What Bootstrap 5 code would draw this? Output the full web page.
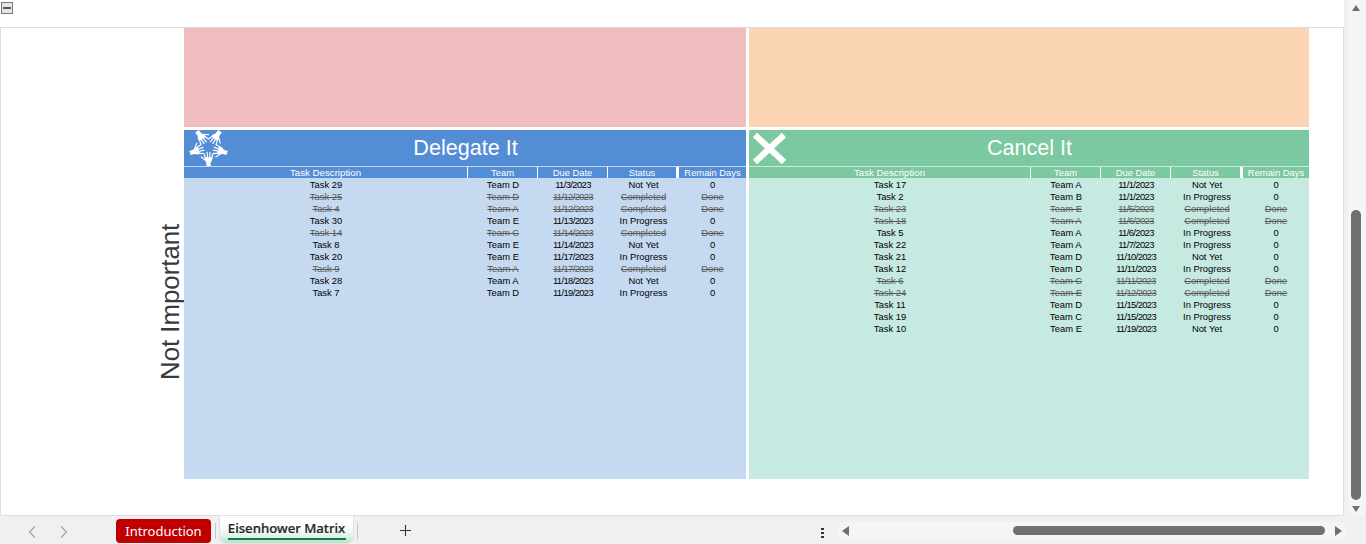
<!DOCTYPE html>
<html lang="en">
<head>
<meta charset="utf-8">
<title>Eisenhower Matrix</title>
<link href="https://cdn.jsdelivr.net/npm/bootstrap@5.3.0/dist/css/bootstrap.min.css" rel="stylesheet">
<style>
html,body{height:544px;overflow:hidden;background:#fff}
body{font-family:"Liberation Sans",Arial,sans-serif}
.xl-app{width:1366px;height:544px}
.xl-main{height:516px}
.xl-left{width:1344px}
.xl-top{height:27px;padding:2px 0 0 1px}
.xl-sheet{height:489px;border:1px solid #dfdfdf;background:#fff;display:grid;grid-template-columns:180px 562px 560px;grid-template-rows:99px 349px;column-gap:3px;row-gap:3px;align-content:start}
.fill-pink{background:#efbdbd}
.fill-peach{background:#fcd5b4}
.xl-label{grid-column:1;font-size:25.8px;line-height:26px;color:#3a3a3a;writing-mode:vertical-rl;transform:rotate(180deg);text-align:center;justify-self:end;height:344px;margin-right:-2px;white-space:nowrap}
.quad-blue{--hd:#538dd5;--bd:#c5d9f1}
.quad-green{--hd:#7cc8a0;--bd:#c6e9e1}
.quad{background:var(--bd);display:flex;flex-direction:column}
.quad-head{height:36px;background:var(--hd);color:#fff;font-size:21.6px;position:relative;display:flex;align-items:center;justify-content:center;margin-bottom:1px;padding-left:1px}
.quad-head svg{position:absolute;left:0;top:0}
.xl-tbl{width:100%;table-layout:fixed;border-collapse:separate;border-spacing:0;font-size:9.4px;text-align:center;color:#000}
.xl-tbl th{font-weight:400;color:#fff;background:var(--hd);height:11px;line-height:11px;padding:0;border-right:1px solid #fff;white-space:nowrap}
.xl-tbl th:first-child{font-size:9.7px}
.xl-tbl th.gapr{border-right:3px solid #fff}
.xl-tbl th:last-child{border-right:0}
.xl-tbl td{height:12px;line-height:11px;padding:1px 0 0;white-space:nowrap}
.xl-tbl td:nth-child(3){letter-spacing:-.6px}
.xl-tbl tr.dn td{color:#595959;text-decoration:line-through}
.vbar{width:22px;background:#f0f0f0;padding:0 0 0 4px}
.vtrack{background:#f5f5f5;height:516px;border-radius:0 0 8px 8px}
.vthumb{width:10px;height:290px;background:#707070;border-radius:5px;margin:199px 0 0 3px}
.tri-u{width:0;height:0;border-left:4.5px solid transparent;border-right:4.5px solid transparent;border-bottom:6px solid #707070;margin:5px 0 0 3.5px}
.tri-d{width:0;height:0;border-left:4.5px solid transparent;border-right:4.5px solid transparent;border-top:6px solid #707070;margin:6px 0 0 3.5px}
.tri-l{width:0;height:0;border-top:5px solid transparent;border-bottom:5px solid transparent;border-right:7px solid #707070}
.tri-r{width:0;height:0;border-top:5px solid transparent;border-bottom:5px solid transparent;border-left:7px solid #707070;margin-left:10px}
.xl-bottom{height:28px;background:#f0f0f0;font-family:"Noto Sans","Open Sans",sans-serif}
.chev-a{margin:9px 0 0 27px}
.chev-b{margin:9px 0 0 22px}
.tab-red{width:95px;height:24px;margin:3px 0 0 47px;background:#c00000;color:#fff;border-radius:4px;font-size:13px;line-height:24px;text-align:center}
.tab-sep{width:1px;height:16px;background:#c8c8c8;margin:7px 0 0 4px}
.tab-act{width:133px;height:27px;margin-left:4px;background:linear-gradient(#fff 35%,#dff2e8 75%,#b9e2cd);border-radius:0 0 6px 6px;box-shadow:0 0 0 1px #e2e2e2;color:#262626;font-size:13.2px;font-weight:500;line-height:24px;text-align:center;position:relative;-webkit-text-stroke:.2px #262626}
.tab-act i{position:absolute;left:8px;right:7px;top:22px;height:2px;background:#107c41}
.plus-ic{margin:8px 0 0 41px}
.hbar{width:510px;height:17px;margin:6px 0 0 13px;background:#f5f5f5;border-radius:8px;padding:0 5px}
.hthumb{width:312px;height:9px;background:#707070;border-radius:5px;margin-left:164px}
.vdots{width:3px;height:11px;margin:11px 0 0 409px;background:radial-gradient(circle,#333 1.3px,transparent 1.5px) 0 0/3px 4px repeat-y}
</style>
</head>
<body>
<div class="xl-app d-flex flex-column">
  <div class="xl-main d-flex">
    <div class="xl-left d-flex flex-column">
      <div class="xl-top">
        <svg width="12" height="12" viewBox="0 0 12 12" class="d-block"><rect x=".5" y=".5" width="11" height="11" fill="#e4e4e4" stroke="#7a7a7a"/><rect x="2" y="5" width="8" height="2" fill="#555"/></svg>
      </div>
      <div class="xl-sheet">
        <div></div>
        <div class="fill-pink"></div>
        <div class="fill-peach"></div>
        <div class="xl-label">Not Important</div>
        <section class="quad quad-blue">
          <div class="quad-head">
            <svg width="50" height="36" viewBox="0 0 50 36" fill="#fff" stroke="#fff">
              <defs>
                <g id="hand">
                  <path d="M-2.2 19.5V15.5L-4 12.5-3.6 10.2H4L3.8 12.8 2.2 15.5V19.5Z" stroke="none"/>
                  <path d="M-3.1 11-4.6 6.6M-1 11-1.4 5.4M1.2 11 1.6 5.4M3.2 11 4.6 6.8M-3.4 13-7.2 10" fill="none" stroke-width="1.2" stroke-linecap="round"/>
                </g>
              </defs>
              <g transform="translate(24.5 17)">
                <use href="#hand"/>
                <use href="#hand" transform="rotate(72)"/>
                <use href="#hand" transform="rotate(144)"/>
                <use href="#hand" transform="rotate(216)"/>
                <use href="#hand" transform="rotate(288)"/>
              </g>
            </svg>
            Delegate It
          </div>
          <table class="xl-tbl">
            <colgroup><col><col style="width:70px"><col style="width:70px"><col style="width:71px"><col style="width:67px"></colgroup>
            <thead><tr><th>Task Description</th><th>Team</th><th>Due Date</th><th class="gapr">Status</th><th>Remain Days</th></tr></thead>
            <tbody>
              <tr><td>Task 29</td><td>Team D</td><td>11/3/2023</td><td>Not Yet</td><td>0</td></tr>
              <tr class="dn"><td>Task 25</td><td>Team D</td><td>11/12/2023</td><td>Completed</td><td>Done</td></tr>
              <tr class="dn"><td>Task 4</td><td>Team A</td><td>11/12/2023</td><td>Completed</td><td>Done</td></tr>
              <tr><td>Task 30</td><td>Team E</td><td>11/13/2023</td><td>In Progress</td><td>0</td></tr>
              <tr class="dn"><td>Task 14</td><td>Team C</td><td>11/14/2023</td><td>Completed</td><td>Done</td></tr>
              <tr><td>Task 8</td><td>Team E</td><td>11/14/2023</td><td>Not Yet</td><td>0</td></tr>
              <tr><td>Task 20</td><td>Team E</td><td>11/17/2023</td><td>In Progress</td><td>0</td></tr>
              <tr class="dn"><td>Task 9</td><td>Team A</td><td>11/17/2023</td><td>Completed</td><td>Done</td></tr>
              <tr><td>Task 28</td><td>Team A</td><td>11/18/2023</td><td>Not Yet</td><td>0</td></tr>
              <tr><td>Task 7</td><td>Team D</td><td>11/19/2023</td><td>In Progress</td><td>0</td></tr>
            </tbody>
          </table>
        </section>
        <section class="quad quad-green">
          <div class="quad-head">
            <svg width="42" height="36" viewBox="0 0 42 36"><path d="M6 5 35 32M35 5 6 32" stroke="#fff" stroke-width="6.2" fill="none"/></svg>
            Cancel It
          </div>
          <table class="xl-tbl">
            <colgroup><col><col style="width:70px"><col style="width:70px"><col style="width:72px"><col style="width:66px"></colgroup>
            <thead><tr><th>Task Description</th><th>Team</th><th>Due Date</th><th class="gapr">Status</th><th>Remain Days</th></tr></thead>
            <tbody>
              <tr><td>Task 17</td><td>Team A</td><td>11/1/2023</td><td>Not Yet</td><td>0</td></tr>
              <tr><td>Task 2</td><td>Team B</td><td>11/1/2023</td><td>In Progress</td><td>0</td></tr>
              <tr class="dn"><td>Task 23</td><td>Team E</td><td>11/5/2023</td><td>Completed</td><td>Done</td></tr>
              <tr class="dn"><td>Task 18</td><td>Team A</td><td>11/6/2023</td><td>Completed</td><td>Done</td></tr>
              <tr><td>Task 5</td><td>Team A</td><td>11/6/2023</td><td>In Progress</td><td>0</td></tr>
              <tr><td>Task 22</td><td>Team A</td><td>11/7/2023</td><td>In Progress</td><td>0</td></tr>
              <tr><td>Task 21</td><td>Team D</td><td>11/10/2023</td><td>Not Yet</td><td>0</td></tr>
              <tr><td>Task 12</td><td>Team D</td><td>11/11/2023</td><td>In Progress</td><td>0</td></tr>
              <tr class="dn"><td>Task 6</td><td>Team C</td><td>11/11/2023</td><td>Completed</td><td>Done</td></tr>
              <tr class="dn"><td>Task 24</td><td>Team E</td><td>11/12/2023</td><td>Completed</td><td>Done</td></tr>
              <tr><td>Task 11</td><td>Team D</td><td>11/15/2023</td><td>In Progress</td><td>0</td></tr>
              <tr><td>Task 19</td><td>Team C</td><td>11/15/2023</td><td>In Progress</td><td>0</td></tr>
              <tr><td>Task 10</td><td>Team E</td><td>11/19/2023</td><td>Not Yet</td><td>0</td></tr>
            </tbody>
          </table>
        </section>
      </div>
    </div>
    <div class="vbar">
      <div class="vtrack d-flex flex-column">
        <div class="tri-u"></div>
        <div class="vthumb"></div>
        <div class="tri-d"></div>
      </div>
    </div>
  </div>
  <div class="xl-bottom d-flex align-items-start">
    <svg class="chev-a" width="10" height="14" viewBox="0 0 10 14"><path d="M8 1.5 2.5 7 8 12.5" fill="none" stroke="#a6a6a6" stroke-width="1.3"/></svg>
    <svg class="chev-b" width="10" height="14" viewBox="0 0 10 14"><path d="M2 1.5 7.5 7 2 12.5" fill="none" stroke="#a6a6a6" stroke-width="1.3"/></svg>
    <div class="tab-red">Introduction</div>
    <div class="tab-sep"></div>
    <div class="tab-act">Eisenhower Matrix<i></i></div>
    <div class="tab-sep"></div>
    <svg class="plus-ic" width="13" height="13" viewBox="0 0 13 13"><path d="M6.5 1V12M1 6.5H12" stroke="#333" stroke-width="1.1"/></svg>
    <div class="vdots"></div>
    <div class="hbar d-flex align-items-center">
      <div class="tri-l"></div>
      <div class="hthumb"></div>
      <div class="tri-r"></div>
    </div>
  </div>
</div>
<script src="https://cdn.jsdelivr.net/npm/bootstrap@5.3.0/dist/js/bootstrap.bundle.min.js"></script>
</body>
</html>
